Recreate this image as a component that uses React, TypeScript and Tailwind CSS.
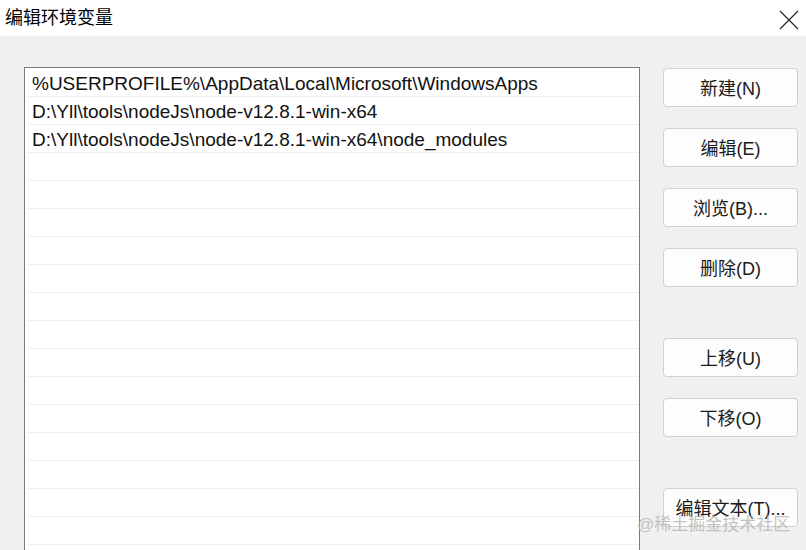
import React from 'react'

const paths = [
	'%USERPROFILE%\\AppData\\Local\\Microsoft\\WindowsApps',
	'D:\\Yll\\tools\\nodeJs\\node-v12.8.1-win-x64',
	'D:\\Yll\\tools\\nodeJs\\node-v12.8.1-win-x64\\node_modules',
]

const font = { fontFamily: '"Segoe UI", "Liberation Sans", "Noto Sans CJK SC", sans-serif' }

const Btn = ({ label, className = '' }: { label: string; className?: string }) => (
	<button
		className={
			'h-[39px] w-[135px] rounded-[4px] border border-[#d0d0d0] bg-[#fdfdfd] pt-[3px] text-[18px] text-[#1a1a1a] ' +
			className
		}
	>
		{label}
	</button>
)

export default function App() {
	const rows = [...paths, ...Array(20).fill('')]
	return (
		<div className="flex h-[550px] w-[806px] flex-col overflow-hidden bg-[#f0f0f0]" style={font}>
			{/* 标题栏 */}
			<div className="flex h-9 shrink-0 items-center justify-between bg-white pl-[5px] pr-[6px]">
				<span className="text-[18px] text-black">编辑环境变量</span>
				<svg width="22" height="22" viewBox="0 0 22 22" className="mt-[4px]">
					<path d="M2 2 L20 20 M20 2 L2 20" stroke="#222" strokeWidth="1.1" fill="none" />
				</svg>
			</div>
			<div className="flex flex-1 pl-6 pt-[31px]">
				{/* 列表 */}
				<div className="h-[520px] w-[616px] shrink-0 border border-[#7a7a7a] bg-white pl-[3px] pt-px">
					{rows.map((p, i) => (
						<div
							key={i}
							className="flex h-[28px] items-center border-b border-[#efefef] pl-1 pt-[3px] text-[19px] text-[#111]"
						>
							{p}
						</div>
					))}
				</div>
				{/* 按钮 */}
				<div className="ml-[23px] flex flex-col pt-px">
					<Btn label="新建(N)" />
					<Btn label="编辑(E)" className="mt-[21px]" />
					<Btn label="浏览(B)..." className="mt-[21px]" />
					<Btn label="删除(D)" className="mt-[21px]" />
					<Btn label="上移(U)" className="mt-[51px]" />
					<Btn label="下移(O)" className="mt-[21px]" />
					<div className="relative mt-[51px]">
						<Btn label="编辑文本(T)..." />
						<span className="pointer-events-none absolute left-[-26px] top-[24px] whitespace-nowrap text-[17px] text-[#b4b4b4]/80">
							@稀土掘金技术社区
						</span>
					</div>
				</div>
			</div>
		</div>
	)
}
